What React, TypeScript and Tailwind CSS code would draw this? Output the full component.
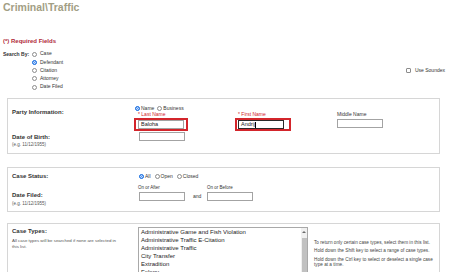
import React from "react";

function Radio({ checked = false }: { checked?: boolean }) {
    return (
        <span className={checked
            ? "inline-block w-[5px] h-[5px] rounded-full border border-[#1a6fe0] bg-[#2f80ed] shadow-[inset_0_0_0_1px_#cfe0fb]"
            : "inline-block w-[5px] h-[5px] rounded-full border border-[#8c8c8c] bg-white"} />
    );
}

function RadioItem({ label, checked = false }: { label: string; checked?: boolean }) {
    return (
        <span className="flex items-center gap-[1px]">
            <Radio checked={checked} />
            <span>{label}</span>
        </span>
    );
}

function Input({ value = "", dark = false, caret = false }: { value?: string; dark?: boolean; caret?: boolean }) {
    return (
        <div className={dark
            ? "w-[46px] h-[9px] border border-[#2a2a2a] bg-white flex items-center pl-[2px] text-[5.5px] leading-[7px] text-[#222]"
            : "w-[46px] h-[9px] border border-[#a3a3a3] bg-white flex items-center pl-[2px] text-[5.5px] leading-[7px] text-[#222]"}>
            <span>{value}</span>
            {caret && <span className="w-[0.5px] h-[6px] bg-black" />}
        </div>
    );
}

const caseTypes = [
    "Administrative Game and Fish Violation",
    "Administrative Traffic E-Citation",
    "Administrative Traffic",
    "City Transfer",
    "Extradition",
    "Felony",
    "Misdemeanor",
];

export default function App() {
    return (
        <div className="w-[450px] h-[272px] overflow-hidden bg-white text-[#333] text-[6px] font-['Liberation_Sans',Arial,sans-serif]">
            <div className="pl-[3px] pt-[1px] h-[14px] text-[10.5px] leading-[12px] font-bold text-[#a29e84]">
                {"Criminal\\Traffic"}
            </div>
            <div className="mt-[24px] pl-[3px] h-[7px] text-[6px] leading-[7px] font-bold text-[#b02a3a]">
                (*) Required Fields
            </div>

            {/* search by */}
            <div className="mt-[5px] flex">
                <div className="w-[32px] pl-[3px] text-[5px] font-bold leading-[8.25px]">Search By:</div>
                <div className="flex flex-col text-[5px]">
                    {["Case", "Defendant", "Citation", "Attorney", "Date Filed"].map(l => (
                        <div key={l} className="h-[8.25px] flex items-center gap-[3px]">
                            <Radio checked={l === "Defendant"} />
                            <span>{l}</span>
                        </div>
                    ))}
                </div>
                <div className="ml-auto mr-[5px] mt-[16.5px] h-[8px] flex items-center gap-[4px] text-[5px]">
                    <span className="w-[5px] h-[5px] border border-[#8c8c8c] rounded-[1px]" />
                    <span>Use Soundex</span>
                </div>
            </div>

            {/* party information */}
            <div className="mt-[7px] ml-[7px] w-[433px] h-[56px] border border-[#d6d6d6] flex">
                <div className="w-[126px] pl-[4px]">
                    <div className="pt-[10px] text-[6px] leading-[7px] font-bold">Party Information:</div>
                    <div className="mt-[18px] text-[6px] leading-[7px] font-bold">Date of Birth:</div>
                    <div className="mt-[1px] text-[4.5px] leading-[6px] text-[#555]">(e.g. 11/12/1955)</div>
                </div>
                <div className="flex flex-col">
                    <div className="mt-[6px] h-[7px] pl-[1px] flex items-center gap-[3px] text-[5px]">
                        <RadioItem label="Name" checked />
                        <RadioItem label="Business" />
                    </div>
                    <div className="flex">
                        <div className="w-[101px]">
                            <div className="pl-[4px] h-[5px] text-[5px] leading-[5px] text-[#d0202a]">* Last Name</div>
                            <div className="mt-[1px] flex w-fit border-2 border-[#d3252b] pl-[2px] pr-[2px]">
                                <Input value="Baloha" />
                            </div>
                            <div className="mt-[1px] ml-[5px]">
                                <Input />
                            </div>
                        </div>
                        <div className="w-[102px]">
                            <div className="pl-[3px] h-[5px] text-[5px] leading-[5px] text-[#d0202a]">* First Name</div>
                            <div className="mt-[1px] flex w-fit border-2 border-[#d3252b] pl-[1px] pr-[5px]">
                                <Input value="Andrij" dark caret />
                            </div>
                        </div>
                        <div>
                            <div className="h-[5px] text-[5px] leading-[5px]">Middle Name</div>
                            <div className="mt-[2px]">
                                <Input />
                            </div>
                        </div>
                    </div>
                </div>
            </div>

            {/* case status */}
            <div className="mt-[13px] ml-[7px] w-[433px] h-[45px] border border-[#d6d6d6] flex">
                <div className="w-[126px] pl-[4px]">
                    <div className="pt-[5px] text-[6px] leading-[7px] font-bold">Case Status:</div>
                    <div className="mt-[12px] text-[6px] leading-[7px] font-bold">Date Filed:</div>
                    <div className="mt-[2px] text-[4.5px] leading-[6px] text-[#555]">(e.g. 11/12/1955)</div>
                </div>
                <div className="flex flex-col pl-[4px]">
                    <div className="mt-[5px] h-[7px] pl-[1px] flex items-center gap-[4px] text-[5px]">
                        <RadioItem label="All" checked />
                        <RadioItem label="Open" />
                        <RadioItem label="Closed" />
                    </div>
                    <div className="mt-[5px] flex items-end text-[4.5px]">
                        <div className="w-[55px]">
                            <div className="h-[5px] leading-[5px]">On or After</div>
                            <div className="mt-[2px] ml-[1px]"><Input /></div>
                        </div>
                        <div className="w-[14px] h-[9px] leading-[9px] text-[5px]">and</div>
                        <div>
                            <div className="h-[5px] leading-[5px]">On or Before</div>
                            <div className="mt-[2px]"><Input /></div>
                        </div>
                    </div>
                </div>
            </div>

            {/* case types */}
            <div className="mt-[11px] ml-[7px] w-[433px] h-[80px] border border-[#d6d6d6] flex">
                <div className="w-[126px] pl-[4px]">
                    <div className="pt-[4px] text-[6px] leading-[7px] font-bold">Case Types:</div>
                    <div className="mt-[3px] w-[106px] text-[4.4px] leading-[6px] text-[#555]">
                        All case types will be searched if none are selected in this list.
                    </div>
                </div>
                <div className="mt-[3px] ml-[4px] w-[170px] h-[70px] border border-[#a9a9a9] flex">
                    <div className="flex-1 pl-[2px] text-[6px] leading-[8px] text-[#222]">
                        {caseTypes.map(t => <div key={t} className="whitespace-nowrap">{t}</div>)}
                    </div>
                    <div className="w-[6px] bg-[#f0f0f0] flex flex-col items-center">
                        <div className="mt-[3px] w-0 h-0 border-l-[2px] border-r-[2px] border-b-[2px] border-l-transparent border-r-transparent border-b-[#6b6b6b]" />
                        <div className="mt-[5px] w-[5px] flex-1 bg-[#c1c1c1]" />
                    </div>
                </div>
                <div className="ml-[6px] pt-[15.5px] w-[125px] text-[4.7px] leading-[5px] text-[#444]">
                    <p className="mb-[3.5px]">To return only certain case types, select them in this list.</p>
                    <p className="mb-[3.5px]">Hold down the Shift key to select a range of case types.</p>
                    <p>Hold down the Ctrl key to select or deselect a single case type at a time.</p>
                </div>
            </div>
        </div>
    );
}
